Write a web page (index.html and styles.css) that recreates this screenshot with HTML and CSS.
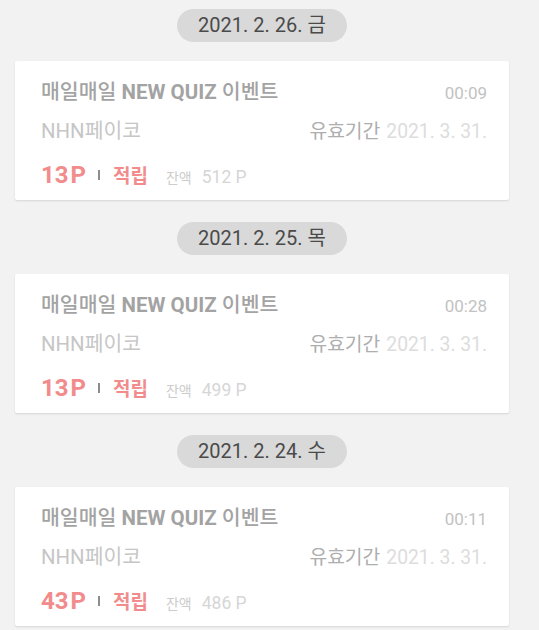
FILE: index.html
```html
<!DOCTYPE html>
<html lang="ko">
<head>
<meta charset="utf-8">
<link rel="stylesheet" href="styles.css">
</head>
<body>
<main class="list">
  <section class="day">
    <div class="date-pill">2021. 2. 26. 금</div>
    <article class="card">
      <div class="row row-title">
        <span class="title">매일매일 <b>NEW QUIZ</b> 이벤트</span>
        <span class="time">00:09</span>
      </div>
      <div class="row row-sub">
        <span class="store">NHN페이코</span>
        <span class="expire"><span class="expire-label">유효기간</span> <span class="expire-date">2021. 3. 31.</span></span>
      </div>
      <div class="row-points">
        <span class="points">13<span class="unit">P</span></span>
        <span class="sep"></span>
        <span class="kind">적립</span>
        <span class="bal-label">잔액</span>
        <span class="bal">512 P</span>
      </div>
    </article>
  </section>
  <section class="day">
    <div class="date-pill">2021. 2. 25. 목</div>
    <article class="card">
      <div class="row row-title">
        <span class="title">매일매일 <b>NEW QUIZ</b> 이벤트</span>
        <span class="time">00:28</span>
      </div>
      <div class="row row-sub">
        <span class="store">NHN페이코</span>
        <span class="expire"><span class="expire-label">유효기간</span> <span class="expire-date">2021. 3. 31.</span></span>
      </div>
      <div class="row-points">
        <span class="points">13<span class="unit">P</span></span>
        <span class="sep"></span>
        <span class="kind">적립</span>
        <span class="bal-label">잔액</span>
        <span class="bal">499 P</span>
      </div>
    </article>
  </section>
  <section class="day">
    <div class="date-pill">2021. 2. 24. 수</div>
    <article class="card">
      <div class="row row-title">
        <span class="title">매일매일 <b>NEW QUIZ</b> 이벤트</span>
        <span class="time">00:11</span>
      </div>
      <div class="row row-sub">
        <span class="store">NHN페이코</span>
        <span class="expire"><span class="expire-label">유효기간</span> <span class="expire-date">2021. 3. 31.</span></span>
      </div>
      <div class="row-points">
        <span class="points">43<span class="unit">P</span></span>
        <span class="sep"></span>
        <span class="kind">적립</span>
        <span class="bal-label">잔액</span>
        <span class="bal">486 P</span>
      </div>
    </article>
  </section>
</main>
</body>
</html>
```
FILE: styles.css
```css
html, body {
  margin: 0;
  padding: 0;
  background: #f2f2f2;
}
body {
  font-family: Roboto, "Noto Sans CJK KR", sans-serif;
  overflow: hidden;
}
.list {
  padding: 0 30px 0 15px;
  display: flex;
  flex-direction: column;
}
.day {
  display: flex;
  flex-direction: column;
  align-items: center;
  padding-top: 9px;
  padding-bottom: 13px;
}
.date-pill {
  width: 170px;
  height: 33px;
  box-sizing: border-box;
  border-radius: 17px;
  background: #d9d9d9;
  color: #4a4a4a;
  font-size: 20px;
  line-height: 33px;
  text-align: center;
}
.card {
  align-self: stretch;
  margin-top: 19px;
  height: 139px;
  box-sizing: border-box;
  background: #fff;
  border-radius: 2px;
  box-shadow: 0 1px 2px rgba(0,0,0,0.12);
  padding: 17px 22px 0 26px;
}
.row {
  display: flex;
  justify-content: space-between;
  align-items: baseline;
}
.row-title {
  height: 28px;
  line-height: 28px;
}
.title {
  font-size: 20.5px;
  font-weight: 500;
  color: #a3a3a3;
}
.title b {
  font-weight: 700;
}
.time {
  font-size: 17px;
  color: #c2c2c2;
}
.row-sub {
  margin-top: 11px;
  height: 28px;
  line-height: 28px;
}
.store {
  font-size: 20.4px;
  color: #c6c6c6;
}
.expire-label {
  font-size: 19.3px;
  color: #aeaeae;
}
.expire-date {
  font-size: 19.3px;
  color: #dddddd;
  margin-left: 2px;
}
.row-points {
  margin-top: 16px;
  height: 28px;
  line-height: 28px;
  display: flex;
  align-items: baseline;
}
.points {
  font-size: 24px;
  font-weight: 700;
  color: #f28b8b;
}
.unit {
  margin-left: 2px;
}
.sep {
  align-self: center;
  width: 2px;
  height: 10px;
  background: #8c8c8c;
  margin: 0 13px 0 12px;
}
.kind {
  font-size: 19px;
  font-weight: 700;
  color: #f28b8b;
}
.bal-label {
  font-size: 14px;
  color: #cccccc;
  margin-left: 18px;
}
.bal {
  font-size: 17.5px;
  color: #d6d6d6;
  margin-left: 10px;
}
```
